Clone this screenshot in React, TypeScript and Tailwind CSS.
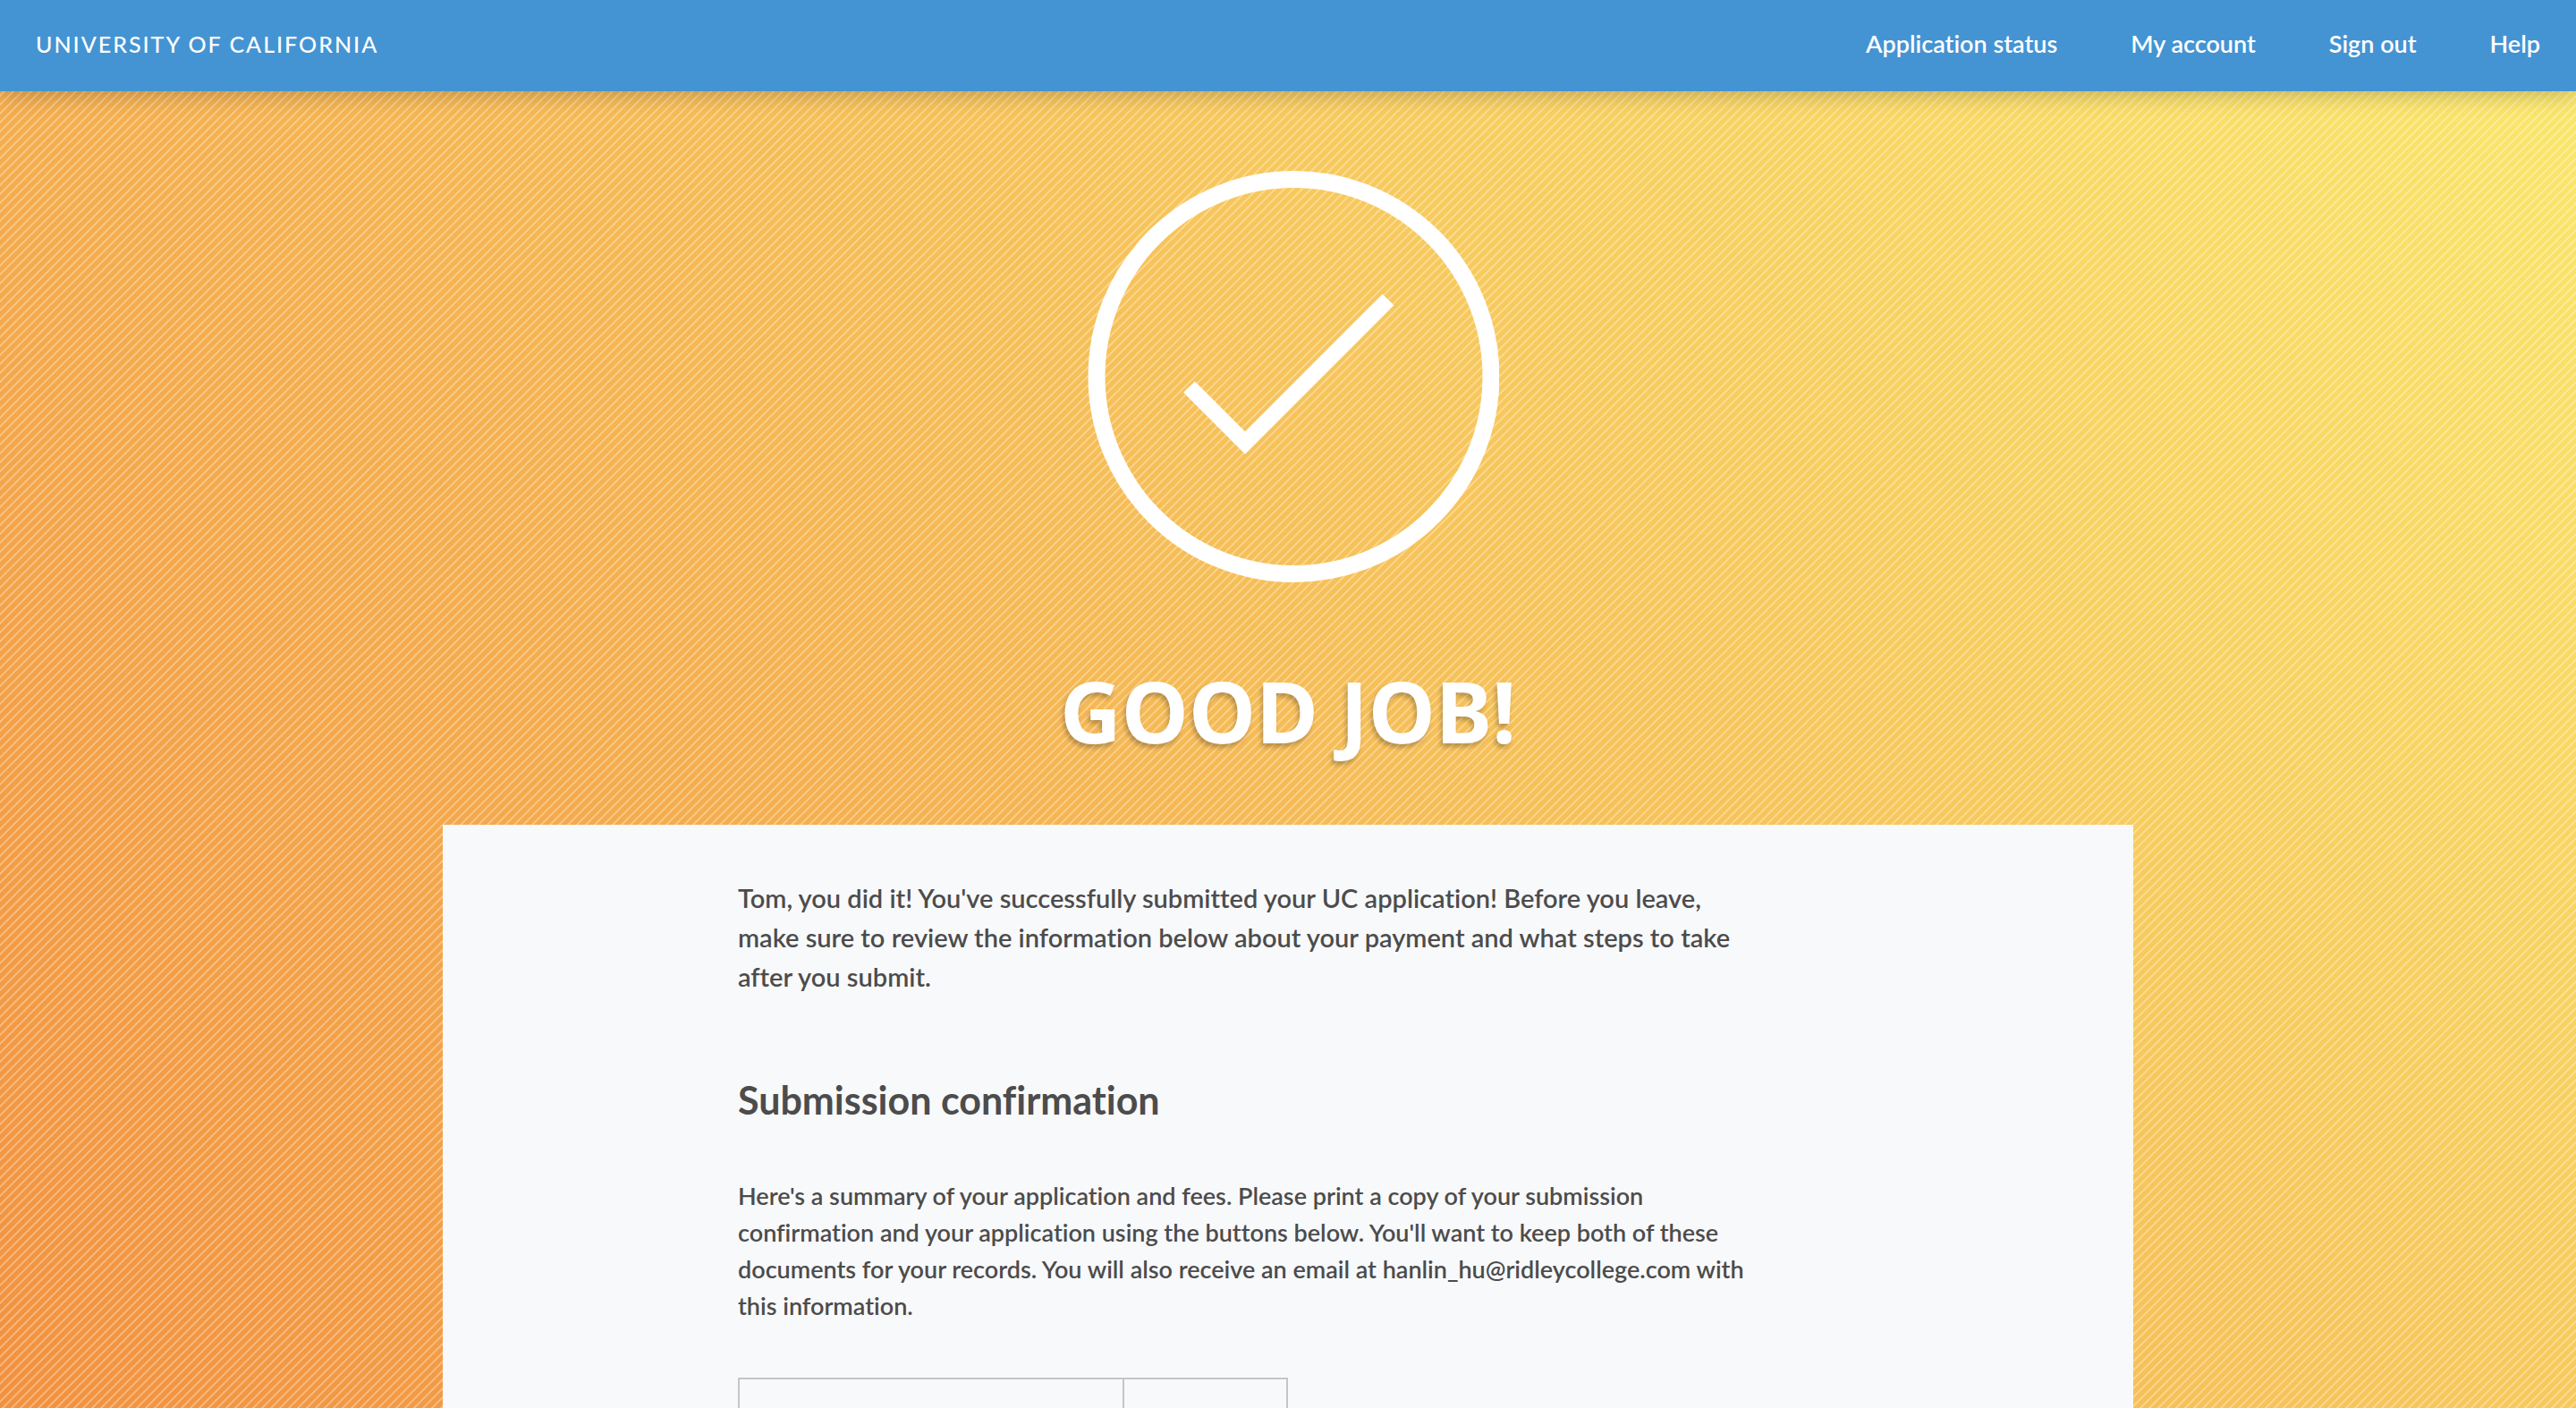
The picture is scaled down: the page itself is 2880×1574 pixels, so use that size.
const navLinks = ["Application status", "My account", "Sign out", "Help"];

function Header() {
  return (
    <header className="relative z-10 flex h-[102px] shrink-0 items-center justify-between bg-[#4494d3] px-10 pb-1 text-white shadow-[0_2px_24px_rgba(0,0,0,0.25)]">
      <a href="#" className="text-[25px] leading-8 font-medium tracking-[2px] uppercase">
        University of California
      </a>
      <nav className="flex gap-[82px] text-[27px] leading-8 font-semibold">
        {navLinks.map((label) => (
          <a key={label} href="#">
            {label}
          </a>
        ))}
      </nav>
    </header>
  );
}

function CheckBadge() {
  return (
    <svg
      viewBox="0 0 472 460"
      className="h-[460px] w-[472px]"
      fill="none"
      stroke="#fff"
      aria-hidden="true"
    >
      <circle cx="242.5" cy="230" r="220.5" strokeWidth="19" />
      <path d="M125.5 241.5 188 304 348 144" strokeWidth="18" />
    </svg>
  );
}

function SummaryTable() {
  return (
    <table className="mt-[60px] w-[615px] table-fixed border-collapse border-2 border-[#c4c6c8]">
      <tbody>
        <tr className="h-[104px]">
          <td className="w-[430px] border-2 border-[#c4c6c8]" />
          <td className="border-2 border-[#c4c6c8]" />
        </tr>
      </tbody>
    </table>
  );
}

export default function App() {
  return (
    <div className="flex h-screen flex-col overflow-hidden font-['Lato','Noto_Sans',sans-serif] text-[#4c4c4c] [font-variant-ligatures:none]">
      <Header />
      <main className="flex min-h-0 flex-1 flex-col items-center overflow-hidden bg-[linear-gradient(135deg,transparent_17%,rgba(255,255,255,0.3)_17%_33%,transparent_33%_67%,rgba(255,255,255,0.3)_67%_83%,transparent_83%),linear-gradient(45deg,#f2913f,#fae66c)] bg-[length:10px_10px,100%_100%] pt-[89px]">
        <div className="shrink-0">
          <CheckBadge />
        </div>
        <h1 className="mt-[95px] font-['Noto_Sans',sans-serif] text-[95px] leading-[96px] font-bold text-white uppercase [text-shadow:-2px_4px_5px_rgba(0,0,0,0.25)]">
          Good job!
        </h1>
        <section className="mt-20 w-full max-w-[1890px] shrink-0 bg-[#f8f9fb] px-[330px] pt-[60px] pb-20">
          <div className="max-w-[1144px]">
            <p className="text-[29px] leading-[44px] font-semibold">
              Tom, you did it! You've successfully submitted your UC application! Before you leave,
              make sure to review the information below about your payment and what steps to take
              after you submit.
            </p>
            <h2 className="mt-[92px] text-[43px] leading-[48px] font-bold">
              Submission confirmation
            </h2>
            <p className="mt-[62px] text-[27px] leading-[41px] font-semibold">
              Here's a summary of your application and fees. Please print a copy of your submission
              confirmation and your application using the buttons below. You'll want to keep both of
              these documents for your records. You will also receive an email at
              hanlin_hu@ridleycollege.com with this information.
            </p>
            <SummaryTable />
          </div>
        </section>
      </main>
    </div>
  );
}
